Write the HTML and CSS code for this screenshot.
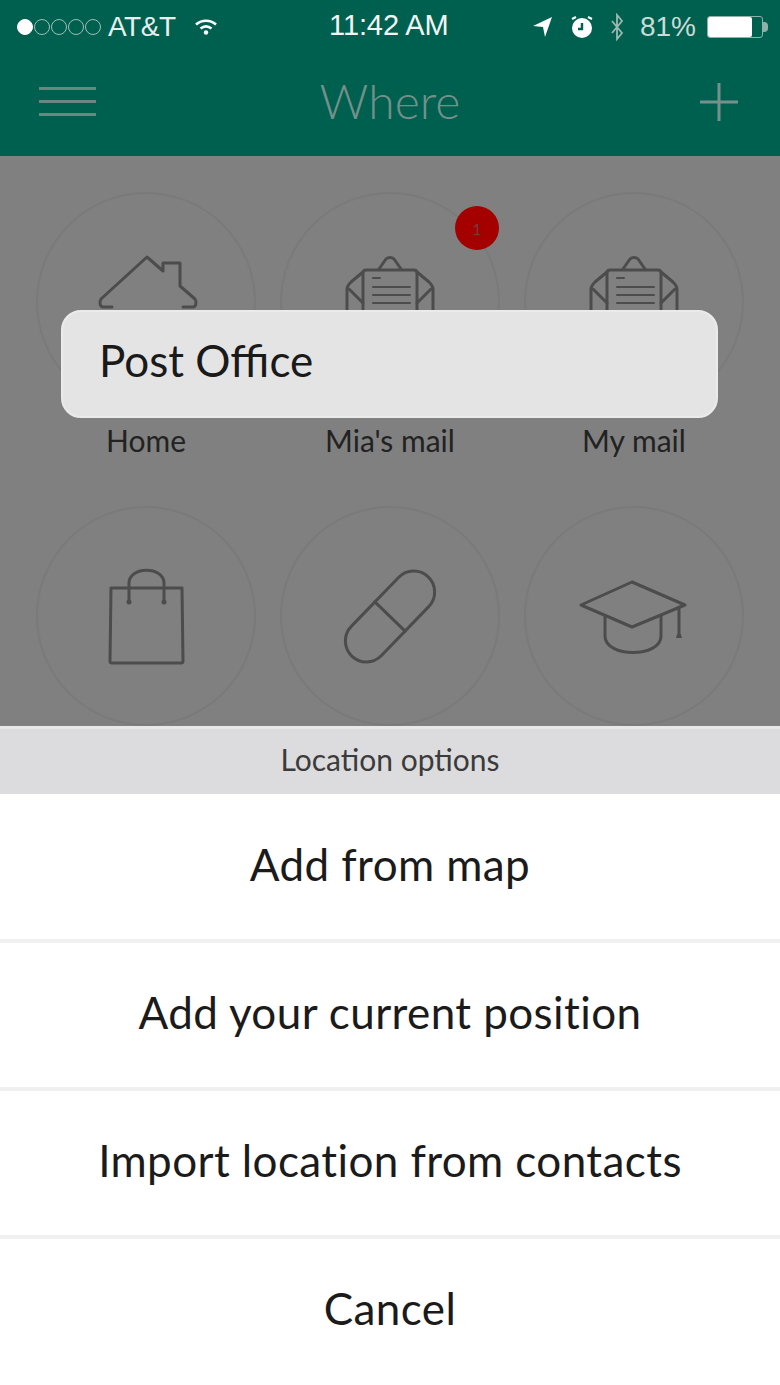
FILE: index.html
```html
<!DOCTYPE html>
<html lang="en">
<head>
<meta charset="utf-8">
<title>Where</title>
<link rel="stylesheet" href="styles.css">
</head>
<body>
<div class="screen">
  <header class="top">
    <div class="status">
      <div class="status-left">
        <span class="signal"><i class="dot on"></i><i class="dot"></i><i class="dot"></i><i class="dot"></i><i class="dot"></i></span>
        <span class="carrier">AT&amp;T</span>
        <svg class="wifi" width="24" height="18" viewBox="0 0 24 18" fill="none" stroke="#fff" stroke-width="2.6"><path d="M2 6.500c6-5 14-5 20 0"/><path d="M6.500 10.500c3.500-2.800 7.500-2.800 11 0"/><circle cx="12" cy="14.500" r="2.200" fill="#fff" stroke="none"/></svg>
      </div>
      <span class="time">11:42 AM</span>
      <div class="status-right">
        <svg class="arrow" width="20" height="22" viewBox="0 0 20 22" fill="#fff"><path d="M0 10 19 1l-7 20-2-10z"/></svg>
        <svg class="alarm" width="24" height="24" viewBox="0 0 24 24"><circle cx="12" cy="13" r="10" fill="#fff"/><path d="M12 8v6H8" fill="none" stroke="#00614f" stroke-width="2.400"/><path d="M2 4l4-2M22 4l-4-2" stroke="#fff" stroke-width="2"/></svg>
        <svg class="bt" width="14" height="28" viewBox="0 0 14 28" fill="none" stroke="#9bb9b1" stroke-width="1.800"><path d="M2 8l10 12-5 6V2l5 6L2 20"/></svg>
        <span class="percent">81%</span>
        <span class="battery"><span class="battery-level"></span></span><span class="battery-tip"></span>
      </div>
    </div>
    <nav class="nav">
      <span class="burger"><i></i><i></i><i></i></span>
      <span class="title">Where</span>
      <svg class="plus" width="42" height="42" viewBox="0 0 42 42" stroke="#77908a" stroke-width="3"><path d="M21 2v38M2 21h38"/></svg>
    </nav>
  </header>

  <main class="backdrop">
    <div class="grid">
      <div class="cell">
        <div class="ring">
          <svg class="icon" width="110" height="110" viewBox="0 0 110 110"><path d="M21 60H12c-3 0-4-5-2-8L56 10l16 14V16h17v23l15 13c2 3 1 8-2 8H92"/></svg>
        </div>
        <span class="label">Home</span>
      </div>
      <div class="cell">
        <div class="ring">
          <span class="badge">1</span>
          <svg class="icon" width="110" height="110" viewBox="0 0 110 110"><path d="M12 64V42c0-3 2-5 4-7l12-10M98 64V42c0-3-2-5-4-7L82 25"/><path d="M14 42l14 14M96 42L82 56"/><path d="M28 64V26c0-2 1-3 3-3h48c2 0 3 1 3 3v38"/><path d="M44 22l7-10c2-2 6-2 8 0l7 10"/><path class="thin" d="M38 31h7M38 40h37M38 48h37M38 56h37"/></svg>
        </div>
        <span class="label">Mia's mail</span>
      </div>
      <div class="cell">
        <div class="ring">
          <svg class="icon" width="110" height="110" viewBox="0 0 110 110"><path d="M12 64V42c0-3 2-5 4-7l12-10M98 64V42c0-3-2-5-4-7L82 25"/><path d="M14 42l14 14M96 42L82 56"/><path d="M28 64V26c0-2 1-3 3-3h48c2 0 3 1 3 3v38"/><path d="M44 22l7-10c2-2 6-2 8 0l7 10"/><path class="thin" d="M38 31h7M38 40h37M38 48h37M38 56h37"/></svg>
        </div>
        <span class="label">My mail</span>
      </div>
      <div class="cell">
        <div class="ring">
          <svg class="icon" width="110" height="110" viewBox="0 0 110 110"><path d="M20 27h71l1 73a2 2 0 0 1-2 2H21a2 2 0 0 1-2-2z"/><path d="M38 41V22c0-17 35-17 35 0v19"/><circle class="solid" cx="38" cy="41" r="2.500"/><circle class="solid" cx="73" cy="41" r="2.500"/></svg>
        </div>
      </div>
      <div class="cell">
        <div class="ring">
          <svg class="icon" width="110" height="110" viewBox="0 0 110 110"><g transform="translate(55 55.500) rotate(44)"><rect x="-21" y="-55" width="42" height="110" rx="21"/><path d="M-21 0h42"/></g></svg>
        </div>
      </div>
      <div class="cell">
        <div class="ring">
          <svg class="icon" width="110" height="110" viewBox="0 0 110 110"><path d="M53 21l53 23-53 22L2 44z"/><path d="M26 55v20c0 22 56 22 56 0V55"/><path d="M100 46v24"/><path class="solid" d="M97 77l3-10 3 10z"/></svg>
        </div>
      </div>
    </div>
    <div class="field">Post Office</div>
  </main>

  <section class="sheet">
    <div class="sheet-head">Location options</div>
    <button class="option">Add from map</button>
    <button class="option">Add your current position</button>
    <button class="option">Import location from contacts</button>
    <button class="option last">Cancel</button>
  </section>
</div>
</body>
</html>
```

FILE: styles.css
```css
* { box-sizing: border-box; }
html, body { margin: 0; padding: 0; }
body { width: 780px; height: 1385px; overflow: hidden; background: #fff; font-family: "Lato", "Open Sans", sans-serif; }
.screen { display: flex; flex-direction: column; width: 780px; height: 1385px; }

.top { height: 156px; background: #006050; flex: none; }
.status { height: 52px; display: flex; align-items: center; justify-content: space-between; padding: 2px 12px 0 17px; position: relative; color: #fff; font-family: "Liberation Sans", sans-serif; font-size: 28px; }
.status-left, .status-right { display: flex; align-items: center; }
.signal { display: flex; gap: 1px; margin-right: 7px; }
.dot { width: 16px; height: 16px; border-radius: 50%; border: 1.500px solid #9fbdb5; display: block; }
.dot.on { background: #fff; border-color: #fff; }
.carrier { color: #e6efed; font-size: 28px; letter-spacing: -.5px; }
.wifi { margin-left: 19px; }
.time { position: absolute; left: 329px; top: 9px; font-size: 29px; color: #f2f6f5; letter-spacing: -.1px; }
.arrow { margin-right: 17px; }
.alarm { margin-right: 16px; }
.bt { margin-right: 16px; }
.percent { color: #c9dbd6; font-size: 28px; margin-right: 11px; }
.battery { width: 56px; height: 22px; display: block; border-radius: 3px; border: 1px solid #8fb1a8; }
.battery-level { display: block; width: 44px; height: 20px; background: #fff; border-radius: 2px; }
.battery-tip { width: 5px; height: 10px; background: #8fb1a8; border-radius: 0 4px 4px 0; display: block; }

.nav { height: 104px; display: flex; align-items: center; justify-content: space-between; padding: 0 40px 0 39px; position: relative; }
.burger { display: flex; flex-direction: column; gap: 10px; width: 57px; margin-bottom: 6px; }
.burger i { display: block; height: 3px; background: #6a8680; }
.title { position: absolute; left: 0; right: 0; text-align: center; font-family: "Lato", sans-serif; font-weight: 300; font-size: 48px; color: #75908a; top: 20px; }
.plus { display: block; margin-bottom: 4px; }

.backdrop { height: 570px; flex: none; background: #808080; position: relative; overflow: hidden; padding: 36px 36px 0; }
.grid { display: grid; grid-template-columns: repeat(3, 220px); column-gap: 24px; row-gap: 0; }
.cell { height: 314px; display: flex; flex-direction: column; align-items: center; }
.ring { width: 220px; height: 220px; border-radius: 50%; border: 2px solid #7a7a7a; position: relative; display: flex; align-items: center; justify-content: center; flex: none; }
.icon { display: block; fill: none; stroke: #4c4c4c; stroke-width: 3; stroke-linejoin: round; stroke-linecap: round; }
.icon .thin { stroke-width: 2; }
.icon .solid { fill: #4c4c4c; stroke: none; }
.label { margin-top: 11px; font-size: 30px; color: #222; line-height: 34px; }
.badge { position: absolute; left: 173px; top: 12px; width: 44px; height: 44px; border-radius: 50%; background: #a40000; color: #7a3a3a; font-size: 16px; display: flex; align-items: center; justify-content: center; }
.field { position: absolute; left: 61px; top: 154px; width: 657px; height: 108px; border-radius: 20px; background: #e4e4e4; border: 2px solid #ebebeb; padding: 0 0 8px 36px; display: flex; align-items: center; font-size: 44px; color: #1a1a1a; }

.sheet { flex: 1; display: flex; flex-direction: column; min-height: 0; }
.sheet-head { height: 68px; flex: none; background: #dcdcde; border-top: 3px solid #e8e8e8; padding-bottom: 6px; display: flex; align-items: center; justify-content: center; font-size: 30px; color: #3b3b3b; }
.option { flex: none; height: 148px; background: #fff; border: 0; border-bottom: 4px solid #f0f0f1; font: inherit; font-size: 44px; color: #1b1b1b; padding: 0 0 6px; letter-spacing: .4px; }
.option:nth-child(2) { height: 149px; }
.option.last { border-bottom: 0; padding-bottom: 10px; }
```
